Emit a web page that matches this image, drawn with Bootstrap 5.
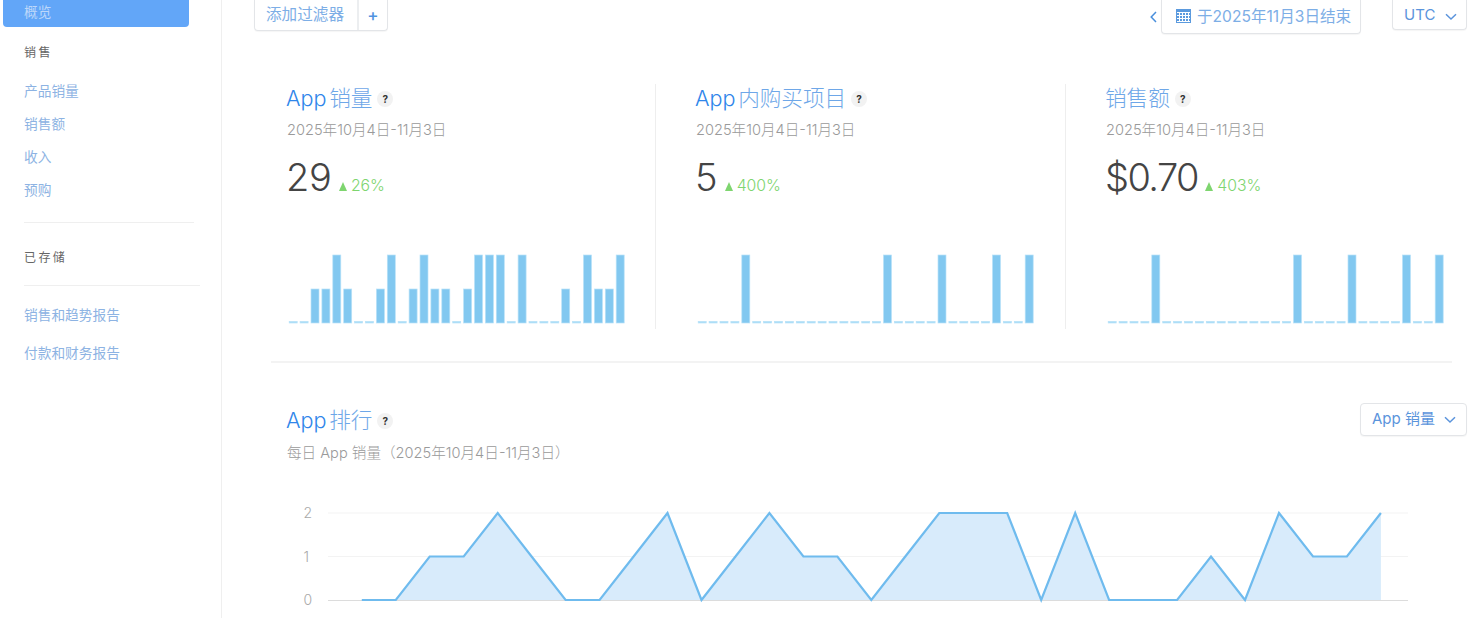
<!doctype html>
<html lang="zh-CN">
<head>
<meta charset="utf-8">
<title>App 分析</title>
<link rel="stylesheet" href="https://cdn.jsdelivr.net/npm/bootstrap@5.3.0/dist/css/bootstrap.min.css">
<style>
html,body{height:618px;overflow:hidden;background:#fff}
body{font-family:Inter,"Noto Sans CJK SC",sans-serif;color:#444;-webkit-font-smoothing:antialiased}
.shell{height:618px}
.side{width:222px;flex:none;border-right:1px solid #efefef;height:618px}
.side-active{margin:0 32px 0 3px;height:27px;background:#62a6f8;border-radius:0 0 4px 4px;color:#bcd7fa;font-size:13.7px;padding:3px 0 0 21px;line-height:19px}
.side-head{font-size:12px;letter-spacing:2.4px;color:#666;padding-left:24px;line-height:16px}
.head-sale{margin-top:18px}
.side .nav-link{color:#8db3e3;font-size:13.7px;line-height:19px;padding:0;margin-left:24px}
.sale-links{margin-top:21px;gap:14px}
.rule-a{border-top:1px solid #efefef;margin:22px 27px 0 24px}
.head-saved{margin-top:27px}
.rule-b{border-top:1px solid #efefef;margin:19px 21px 0 24px}
.report-links{margin-top:20px;gap:19px}
.main-pane{min-width:0}
.top-strip{padding-left:32px;padding-right:5px;height:84px}
.soft-btn{border:1px solid #e3e5e8;border-top:0;background:#fff;color:#7daee6;border-radius:0 0 4px 4px;box-shadow:0 1px 1px rgba(0,0,0,.04);font-size:15.6px;line-height:20px}
.filter-group{height:31px}
.filter-label{width:104px;padding:5px 0 0 11px;border-right:2px solid #eceef0}
.filter-plus{width:28px;text-align:center;padding-top:5px;color:#4f93e0;font-size:17px;font-weight:500}
.date-nav{color:#4a8fdc;margin-right:1px;width:13px;height:34px}
.date-btn{width:200px;height:34px;padding:7px 0 0 14px;gap:6px;font-size:15.6px}
.date-glyph{margin-top:2px}
.utc-btn{width:75px;height:30px;margin-left:31px;padding:5px 0 0 11px;gap:10px;color:#5b94dc;font-size:15px}
.metrics{display:grid;grid-template-columns:384px 410px 387px;margin-left:49px;height:245px}
.metric{padding-left:15px;position:relative}
.metric+.metric{border-left:1px solid #eeeeee;padding-left:39px}
.metric-title{font-size:21.6px;font-weight:300;color:#2f86ea;line-height:28px;margin:0;word-spacing:-3.5px}
.cjk-soft{color:#6ea7e8}
.tip{display:inline-flex;width:16px;height:16px;border-radius:50%;background:#f2f2f2;color:#333;font-size:10px;font-weight:700;align-items:center;justify-content:center;margin-left:5px;font-style:normal;font-family:Inter,sans-serif;vertical-align:3px}
.metric-date{font-size:14.6px;color:#9a9a9a;line-height:20px;margin-top:8px;font-weight:300;padding-left:1px}
.metric-value{margin-top:16px;height:42px;line-height:42px;gap:7.5px}
.big-num{font-size:38px;font-weight:300;color:#444;letter-spacing:-.4px}
.money-num{letter-spacing:-1.6px}
.delta{font-size:15.8px;color:#7ed56f;font-weight:300}
.delta i{display:inline-block;width:0;height:0;border-left:4.5px solid transparent;border-right:4.5px solid transparent;border-bottom:9.5px solid #7ed56f;margin-right:4px}
.bars{display:block;width:340px;height:72px;margin-top:55px;margin-left:2px}
.section-rule{border-top:2px solid #f3f3f3;margin:32px 20px 0 49px}
.rank-head{margin:0 5px 0 64px;height:119px;padding-top:43px}
.rank-sub{font-size:14.6px;color:#9a9a9a;line-height:20px;margin-top:9px;font-weight:300;padding-left:1px}
.rank-btn{width:107px;height:33px;border:1px solid #e3e5e8;border-radius:4px;background:#fff;color:#5b94dc;font-size:15px;padding:4px 0 0 11px;gap:9px;box-shadow:0 1px 1px rgba(0,0,0,.04);margin-top:-3px}
.rank-chart{display:block;width:1250px;height:136px;margin-left:0}
.rank-chart text{font-family:Inter,sans-serif;font-size:14px;font-weight:300;fill:#a9a9a9}
</style>
</head>
<body>
<div class="shell d-flex">
  <aside class="side">
    <div class="side-active">概览</div>
    <div class="side-head head-sale">销售</div>
    <nav class="nav flex-column sale-links">
      <a class="nav-link" href="#">产品销量</a>
      <a class="nav-link" href="#">销售额</a>
      <a class="nav-link" href="#">收入</a>
      <a class="nav-link" href="#">预购</a>
    </nav>
    <div class="rule-a"></div>
    <div class="side-head head-saved">已存储</div>
    <div class="rule-b"></div>
    <nav class="nav flex-column report-links">
      <a class="nav-link" href="#">销售和趋势报告</a>
      <a class="nav-link" href="#">付款和财务报告</a>
    </nav>
  </aside>
  <main class="main-pane flex-grow-1">
    <div class="top-strip d-flex align-items-start">
      <div class="soft-btn filter-group d-flex">
        <div class="filter-label">添加过滤器</div>
        <div class="filter-plus">+</div>
      </div>
      <div class="ms-auto d-flex align-items-center date-nav justify-content-center">
        <svg width="7" height="12" viewBox="0 0 7 12"><path d="M6 1 1.2 6 6 11" fill="none" stroke="currentColor" stroke-width="1.5"/></svg>
      </div>
      <div class="soft-btn date-btn d-flex">
        <svg width="15" height="14" viewBox="0 0 15 14" class="date-glyph"><path fill="#5b9ade" d="M0 0h15v14H0z"/><path stroke="#fff" stroke-width="1" d="M1 3.5h13M1 6.5h13M1 9.5h13M1 12.5h13M3.5 3v10M6.5 3v10M9.5 3v10M12.5 3v10"/></svg>
        <span>于2025年11月3日结束</span>
      </div>
      <div class="soft-btn utc-btn d-flex">
        <span>UTC</span>
        <svg width="12" height="8" viewBox="0 0 12 8" class="mt-2"><path d="M1 1.2 6 6l5-4.8" fill="none" stroke="currentColor" stroke-width="1.5"/></svg>
      </div>
    </div>
    <section class="metrics">
      <div class="metric">
        <h2 class="metric-title">App <span class="cjk-soft">销量</span><em class="tip">?</em></h2>
        <div class="metric-date">2025年10月4日-11月3日</div>
        <div class="metric-value d-flex align-items-baseline"><span class="big-num">29</span><span class="delta"><i></i>26%</span></div>
        <svg class="bars" viewBox="0 0 340 72" data-v="0,0,1,1,2,1,0,0,1,2,0,1,2,1,1,0,1,2,2,2,0,2,0,0,0,1,0,2,1,1,2"></svg>
      </div>
      <div class="metric">
        <h2 class="metric-title">App <span class="cjk-soft">内购买项目</span><em class="tip">?</em></h2>
        <div class="metric-date">2025年10月4日-11月3日</div>
        <div class="metric-value d-flex align-items-baseline"><span class="big-num">5</span><span class="delta"><i></i>400%</span></div>
        <svg class="bars" viewBox="0 0 340 72" data-v="0,0,0,0,2,0,0,0,0,0,0,0,0,0,0,0,0,2,0,0,0,0,2,0,0,0,0,2,0,0,2"></svg>
      </div>
      <div class="metric">
        <h2 class="metric-title"><span class="cjk-soft">销售额</span><em class="tip">?</em></h2>
        <div class="metric-date">2025年10月4日-11月3日</div>
        <div class="metric-value d-flex align-items-baseline"><span class="big-num money-num">$0.70</span><span class="delta"><i></i>403%</span></div>
        <svg class="bars" viewBox="0 0 340 72" data-v="0,0,0,0,2,0,0,0,0,0,0,0,0,0,0,0,0,2,0,0,0,0,2,0,0,0,0,2,0,0,2"></svg>
      </div>
    </section>
    <div class="section-rule"></div>
    <section>
      <div class="rank-head d-flex justify-content-between align-items-start">
        <div>
          <h2 class="metric-title">App <span class="cjk-soft">排行</span><em class="tip">?</em></h2>
          <div class="rank-sub">每日 App 销量（2025年10月4日-11月3日）</div>
        </div>
        <div class="rank-btn d-flex">
          <span>App 销量</span>
          <svg width="12" height="8" viewBox="0 0 12 8" class="mt-2"><path d="M1 1.2 6 6l5-4.8" fill="none" stroke="currentColor" stroke-width="1.5"/></svg>
        </div>
      </div>
      <svg class="rank-chart" viewBox="222 482 1250 136" id="rankChart">
        <path d="M328 513H1408M328 556.5H1408" stroke="#f3f3f3" stroke-width="1" fill="none"/>
        <path d="M328 600.5H1408" stroke="#dcdcdc" stroke-width="1" fill="none"/>
        <text x="303.5" y="518">2</text>
        <text x="303.5" y="561.5">1</text>
        <text x="303.5" y="605">0</text>
      </svg>
    </section>
  </main>
</div>
<script>
var NS='http://www.w3.org/2000/svg';
function el(tag,attrs,parent){var n=document.createElementNS(NS,tag);for(var k in attrs)n.setAttribute(k,attrs[k]);parent.appendChild(n);return n;}
document.querySelectorAll('.bars').forEach(function(svg){
  svg.dataset.v.split(',').forEach(function(v,i){
    var x=1.2+i*10.9,h=v=='2'?68:v=='1'?34:1.6,y=70-h;
    el('rect',{x:x,y:y,width:8,height:h,fill:v=='0'?'#a6dcf6':'#82c8f0',stroke:'#b9e2f8','stroke-width':.7},svg);
  });
});
var vals=[0,0,1,1,2,1,0,0,1,2,0,1,2,1,1,0,1,2,2,2,0,2,0,0,0,1,0,2,1,1,2];
var c=document.getElementById('rankChart');
var pts=vals.map(function(v,i){return (361.8+i*33.97).toFixed(1)+' '+(600-v*43.5);}).join(' L');
el('path',{d:'M'+pts+' L1380.9 600 L361.8 600Z',fill:'#d8ebfb'},c);
el('path',{d:'M'+pts,fill:'none',stroke:'#6fbbee','stroke-width':2.2,'stroke-linejoin':'miter'},c);
</script>
<script src="https://cdn.jsdelivr.net/npm/bootstrap@5.3.0/dist/js/bootstrap.bundle.min.js"></script>
</body>
</html>
